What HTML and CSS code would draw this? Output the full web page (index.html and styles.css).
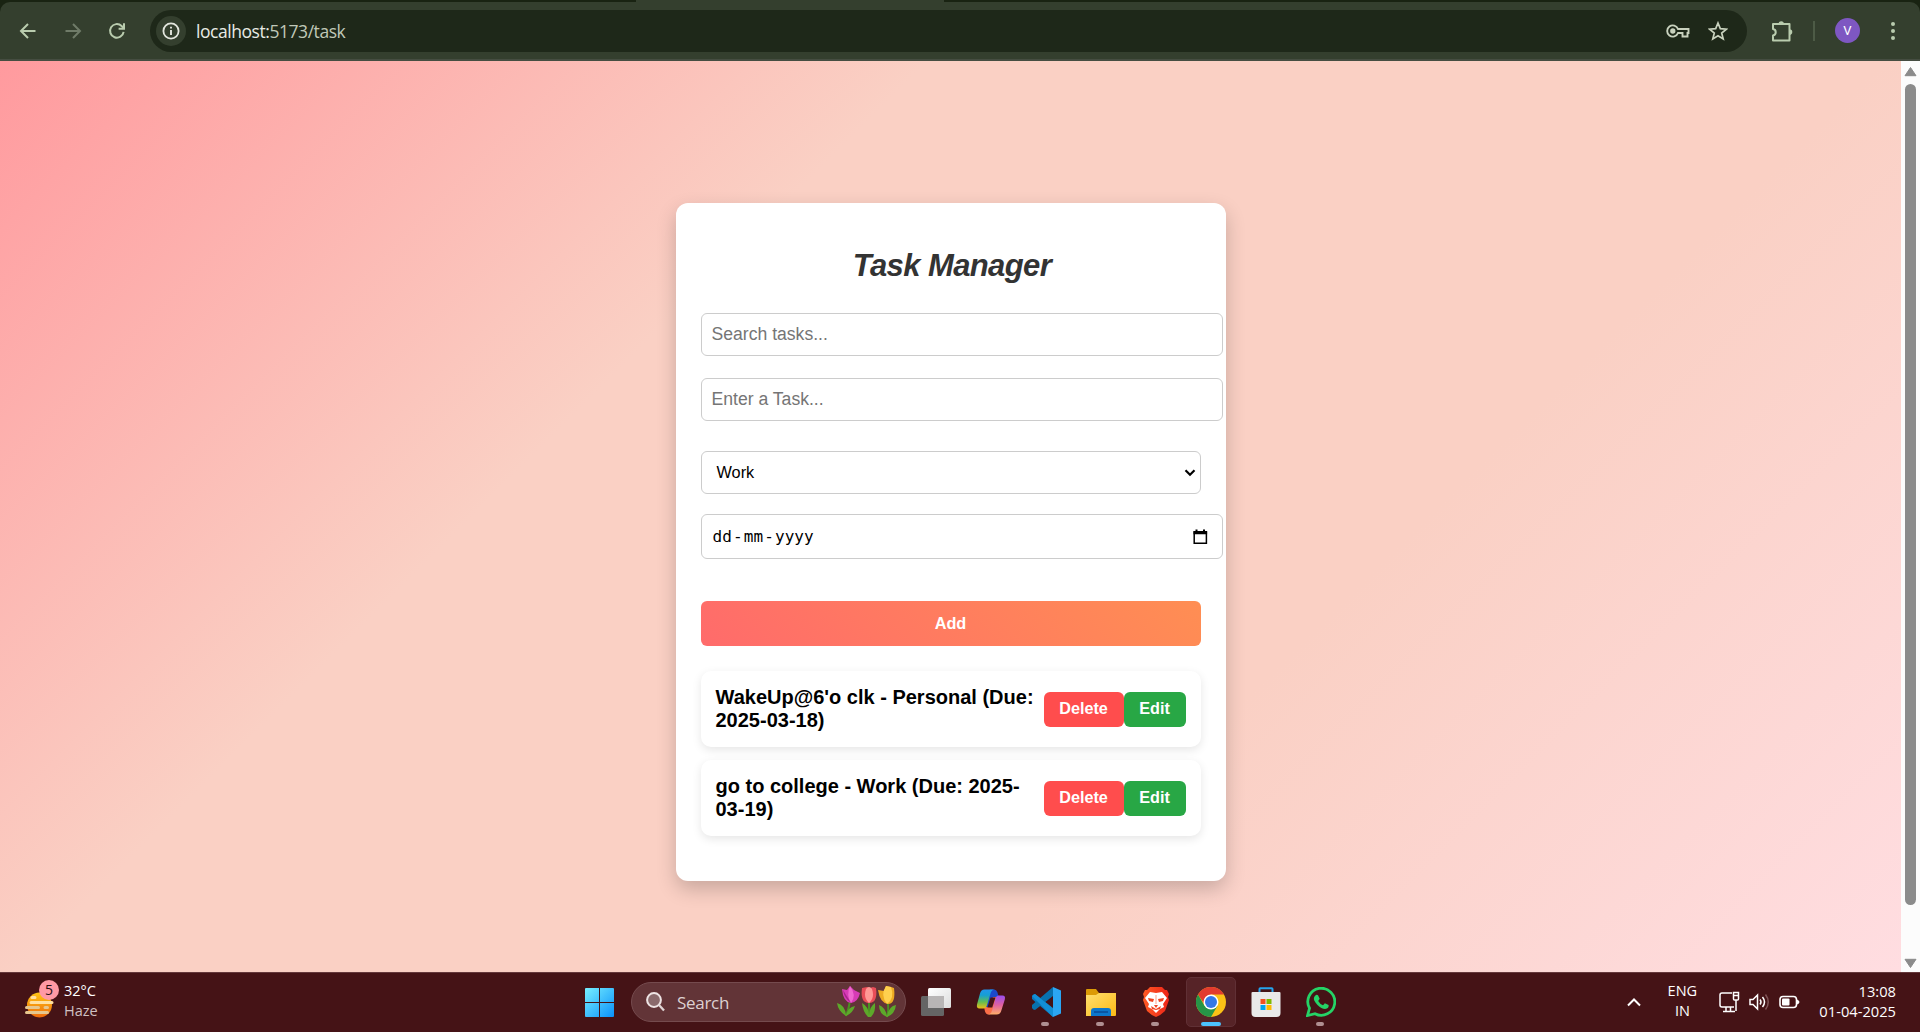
FILE: index.html
```html
<!DOCTYPE html>
<html lang="en">
<head>
<meta charset="utf-8">
<title>Task Manager</title>
<link rel="stylesheet" href="styles.css">
</head>
<body>
<header class="browser">
  <div class="tabstrip"><span class="active-tab"></span></div>
  <div class="toolbar">
    <nav class="nav">
      <svg width="20" height="20" viewBox="0 0 20 20" class="nav-icon"><path d="M17.5 10H3.5M10 3L3 10l7 7"/></svg>
      <svg width="20" height="20" viewBox="0 0 20 20" class="nav-icon disabled"><path d="M2.500 10h14M10 3l7 7-7 7"/></svg>
      <svg width="20" height="20" viewBox="0 0 20 20" class="nav-icon"><path d="M16.600 10.800A6.800 6.800 0 1 1 14.600 5L17 7.400M17 2.300v5.400h-5.400"/></svg>
    </nav>
    <div class="omnibox">
      <span class="site-info"><svg width="18" height="18" viewBox="0 0 18 18"><circle cx="9" cy="9" r="7.600" fill="none" stroke="#e3e6de" stroke-width="1.800"/><path d="M9 8v5M9 4.800v1.800" stroke="#e3e6de" stroke-width="1.900"/></svg></span>
      <span class="url">localhost:<span class="url-rest">5173/task</span></span>
      <svg class="key" width="24" height="16" viewBox="0 0 24 16" fill="none" stroke="#c9d2be" stroke-width="1.900"><path d="M12 6A5.600 5.600 0 1 0 12 10H16.500v3.500h5V10h1V6z"/><circle cx="6.800" cy="8" r="1.700" fill="#c9d2be"/></svg>
      <svg class="star" width="20" height="20" viewBox="0 0 20 20"><path d="M10 2l2.300 5.600 6.100.5-4.700 3.900 1.500 5.900L10 14.700 4.800 17.900l1.500-5.900L1.600 8.100l6.100-.5z" fill="none" stroke="#c9d2be" stroke-width="1.700"/></svg>
    </div>
    <svg class="ext" width="22" height="22" viewBox="0 0 22 22"><path d="M2 4h16.500v16.500H2V15.500a3.300 3.300 0 0 0 0-6.500z" fill="none" stroke="#b9ccae" stroke-width="2" stroke-linejoin="round"/><path d="M7.500 4a2.700 2.700 0 0 1 5.400 0zM18.500 9.300a2.800 2.800 0 0 1 0 5.600z" fill="#b9ccae"/></svg>
    <span class="divider"></span>
    <span class="avatar">V</span>
    <svg class="dots" width="6" height="20" viewBox="0 0 6 20" fill="#b9ccae"><circle cx="3" cy="3" r="2"/><circle cx="3" cy="10" r="2"/><circle cx="3" cy="17" r="2"/></svg>
  </div>
</header>

<div class="viewport">
  <main class="page">
    <section class="card">
      <h1 class="title">Task Manager</h1>
      <input class="field search" type="text" placeholder="Search tasks...">
      <input class="field task" type="text" placeholder="Enter a Task...">
      <div class="select"><span>Work</span><svg width="12" height="8" viewBox="0 0 12 8"><path d="M1.500 1.200L6 5.700l4.500-4.500" fill="none" stroke="#000" stroke-width="2.200"/></svg></div>
      <div class="date"><span class="date-text"><span>dd</span><i>-</i><span>mm</span><i>-</i><span>yyyy</span></span>
        <svg width="15" height="16" viewBox="0 0 15 16"><path d="M1.200 3h12.200v11.300H1.200z" fill="none" stroke="#000" stroke-width="1.500"/><path d="M.5 2h13.600v3.200H.5zM2.500.5h2V3h-2zM10 .5h2V3h-2z"/></svg></div>
      <button class="add">Add</button>
      <ul class="tasks">
        <li class="item"><span class="label">WakeUp@6'o clk - Personal (Due: 2025-03-18)</span><button class="btn delete">Delete</button><button class="btn edit">Edit</button></li>
        <li class="item"><span class="label">go to college - Work (Due: 2025-03-19)</span><button class="btn delete">Delete</button><button class="btn edit">Edit</button></li>
      </ul>
    </section>
  </main>
  <aside class="scrollbar">
    <svg width="13" height="10" viewBox="0 0 13 10"><path d="M6.500.5L12 8.700H1z" fill="#8b8b8b" stroke="#8b8b8b" stroke-linejoin="round"/></svg>
    <span class="thumb"></span>
    <svg width="13" height="10" viewBox="0 0 13 10"><path d="M6.500 9.500L12 1.300H1z" fill="#8b8b8b" stroke="#8b8b8b" stroke-linejoin="round"/></svg>
  </aside>
</div>

<footer class="taskbar">
  <div class="weather">
    <div class="weather-icon">
      <svg width="32" height="28" viewBox="0 0 32 28"><defs><linearGradient id="sun" x2="0" y2="1"><stop stop-color="#ffc414"/><stop offset="1" stop-color="#ee6a0b"/></linearGradient></defs><circle cx="15.500" cy="14" r="12.500" fill="url(#sun)"/><g stroke="#ffe0a0" stroke-width="3" stroke-linecap="round"><path d="M8 6.500h3M7 11.500h21"/><path stroke="#e6c68e" d="M2.500 16.500h12M21 16.500h2.500M2.500 21.500h21"/></g></svg>
      <span class="badge">5</span>
    </div>
    <div class="weather-text"><span>32°C</span><span class="muted">Haze</span></div>
  </div>

  <div class="dock">
    <svg class="start" width="29" height="29" viewBox="0 0 29 29"><defs><linearGradient id="win" x2="1" y2="1"><stop stop-color="#77efff"/><stop offset="1" stop-color="#0a91fa"/></linearGradient></defs><path d="M0 1a1 1 0 0 1 1-1h13v14H0zM15 0h13a1 1 0 0 1 1 1v13H15zM0 15h14v14H1a1 1 0 0 1-1-1zM15 15h14v13a1 1 0 0 1-1 1H15z" fill="url(#win)"/></svg>
    <div class="search-box">
      <svg width="19" height="20" viewBox="0 0 19 20"><circle cx="8" cy="8" r="6.900" fill="#8a6a6c" stroke="#eee4e4" stroke-width="2"/><path d="M13 13l5 5.500" stroke="#e0d6d6" stroke-width="2.300"/></svg>
      <span>Search</span>
      <svg class="tulips" width="60" height="32" viewBox="0 0 60 32">
        <g fill="none" stroke="#4b8f22" stroke-width="2"><path d="M13 15Q12 22 9 30M32 16v15M51 16q1 8-1 15"/></g>
        <g fill="#5da82a"><path d="M9 30Q1 25 0 17q8 2 9 12Q11 21 18 20q-2 7-9 10zM31 31q-5-5-6-14 7 4 7 12Q33 20 38 17q1 9-4 14zM50 31q-8-3-8-12 6 2 8 11 2-10 9-11-1 9-9 12z"/></g>
        <path d="M5 3l5 1 3-4 4 4 6 3q-2 9-9 10Q6 16 5 3z" fill="#d73bb5"/><path d="M13 0q-4 9 1 17Q20 9 13 0z" fill="#f067cf"/><path d="M6 4q1 8 8 13" fill="#a8238b"/>
        <path d="M25 2l5-1 3 1 3-1 3 1q2 15-7 15T25 2z" fill="#e84d58"/><path d="M29 3q3-4 6 0 3 9-3 14-6-5-3-14z" fill="#ff9995"/>
        <path d="M41 4l6 1 2-5 5 1 3 1q2 16-6 16-8-1-10-14z" fill="#edaa22"/><path d="M49 0q-6 9 1 18 8-6 4-17z" fill="#ffd04e"/>
      </svg>
    </div>
    <div class="apps">
      <span class="app"><svg width="30" height="30" viewBox="0 0 30 30"><defs><linearGradient id="tv" x2="1" y2="1"><stop stop-color="#fff"/><stop offset="1" stop-color="#dcdcdc"/></linearGradient></defs><rect y="9" width="23" height="20" rx="1.500" fill="#656565"/><rect x="7" y="1" width="23" height="20" rx="1.500" fill="url(#tv)"/><path d="M7 9h16v12H8.500A1.500 1.500 0 0 1 7 19.500z" fill="#b8b5b5"/></svg></span>
      <span class="app"><svg width="30" height="30" viewBox="0 0 30 30"><defs><linearGradient id="c1" x2="0" y2="1"><stop stop-color="#2195ed"/><stop offset=".3" stop-color="#169fd4"/><stop offset=".65" stop-color="#61bd52"/><stop offset="1" stop-color="#eebd16"/></linearGradient><linearGradient id="c2" x2="0" y2="1"><stop stop-color="#994df0"/><stop offset=".5" stop-color="#df60a0"/><stop offset="1" stop-color="#ffae68"/></linearGradient></defs><path d="M14 2.500h4q2.500 0 3.300 2.500l1.200 4h2q-4 0-5.500 4l-2.500 8H9l4-17z" fill="#1b49ca"/><path d="M8 20h6l3-10h4l-4.500 14q-1 3.500-4 3.500-2.500 0-3.500-3z" fill="#fa6d47"/><path d="M8.500 2.500H19q-3.500 0-4.500 4L11 18q-1 3.500-3.500 3.500h-4Q.2 21.500 1 17.500L4 6.500q1-4 4.500-4z" fill="url(#c1)"/><path d="M22 8.500h4.500q3.300 0 2.300 4L25.500 23q-1 4.500-5 4.500H11q4 0 5-4l3.500-12q1-3 2.500-3z" fill="url(#c2)"/><path d="M14.500 10.500h5l-3.300 10h-4.800z" fill="#451316"/></svg></span>
      <span class="app running"><svg width="30" height="30" viewBox="0 0 30 30"><path d="M1 9q1-2 3-2l18 14v9L1 12z" fill="#0879bd"/><path d="M1 21q1 2 3 2L22 9V0L1 18z" fill="#0871ae"/><path d="M1 9l3-2 18 14.500V30Z" fill="#128fd6"/><path d="M22 0l8 3.500v23L22 30V8.500z" fill="#2ba6f3"/></svg></span>
      <span class="app running"><svg width="30" height="30" viewBox="0 0 30 30"><defs><linearGradient id="fold" x2="1" y2="1"><stop stop-color="#ffe070"/><stop offset="1" stop-color="#fbb915"/></linearGradient></defs><path d="M0 3q0-1 1-1h9l3 4h16v10H0z" fill="#dc9b06"/><path d="M0 8h10l3-2h17v22q0 1-1 1H0z" fill="url(#fold)"/><path d="M5 29v-5q0-3 3-3h14q3 0 3 3v5z" fill="#0d77cb"/><path d="M8 25h14" stroke="#084b97" stroke-width="1.500"/></svg></span>
      <span class="app running"><svg width="30" height="30" viewBox="0 0 30 30"><defs><linearGradient id="brave" x2="1"><stop stop-color="#ff5a24"/><stop offset="1" stop-color="#ee2418"/></linearGradient></defs><path d="M9 0h12l3 3h2l2 4-1 3 1 3-4 11q-4 4-9 6-5-2-9-6L2 13l1-3-1-3 2-4h2z" fill="url(#brave)"/><path d="M9 5l6 1 6-1 5 6-4 6 1 3-4 2-4 4-4-4-4-2 1-3-4-6z" fill="#fff"/><path d="M7 11l6 1-1 3-4-1zM23 11l-6 1 1 3 4-1zM13 18h4l-2 3zM10 19l5 3 5-3-1 3-4 1-4-1z" fill="#f04420"/><path d="M14 8h2v9h-2z" fill="#ffd0c3"/></svg></span>
      <span class="app running active"><svg width="30" height="30" viewBox="0 0 30 30"><circle cx="15" cy="15" r="15" fill="#fbc116"/><path d="M2 7.500A15 15 0 0 1 28 7.500H15L9 18z" fill="#e23b2e"/><path d="M2 7.500l6.500 11.250L21.500 18.800 15 30A15 15 0 0 1 2 7.500z" fill="#269447"/><circle cx="15" cy="15" r="7.500" fill="#fff"/><circle cx="15" cy="15" r="6" fill="#3478e6"/></svg></span>
      <span class="app"><svg width="30" height="30" viewBox="0 0 30 30"><path d="M8.500 6V2q0-.8.800-.8h11.400q.8 0 .8.800v4" fill="none" stroke="#25a4ec" stroke-width="2"/><path d="M.5 6q0-1 1-1h27q1 0 1 1v20q0 4-4 4h-21q-4 0-4-4z" fill="#e9e9e9"/><path d="M9.500 12h5v5h-5z" fill="#f25022"/><path d="M15.500 12h5v5h-5z" fill="#7fba00"/><path d="M9.500 18h5v5h-5z" fill="#00a4ef"/><path d="M15.500 18h5v5h-5z" fill="#ffb900"/></svg></span>
      <span class="app running"><svg width="30" height="30" viewBox="0 0 30 30"><path d="M1.500 28.500l2-7.200A13.500 13.500 0 1 1 9 26.700z" fill="none" stroke="#25d366" stroke-width="2.800"/><path d="M10 8q1-.6 2 .2l1.700 3.500-1.500 2.200q1.800 3.200 4.800 4.300l1.900-2 3.700 1.800q.6 3.500-3.500 4Q15.500 22 11.500 18 7 13 8 10.500 8.700 8.500 10 8z" fill="#25d366"/></svg></span>
    </div>
  </div>

  <div class="tray">
    <svg class="chevron" width="14" height="10" viewBox="0 0 14 10"><path d="M1 8.500l6-6 6 6" fill="none" stroke="#fff" stroke-width="2"/></svg>
    <div class="lang"><span>ENG</span><span>IN</span></div>
    <div class="status">
      <svg width="21" height="22" viewBox="0 0 21 22" fill="none" stroke="#fff" stroke-width="1.500"><path d="M13 2H3Q1 2 1 4v10q0 2 2 2h12M4 20.500h12M7 16v4M11.500 16v4"/><path d="M14.500 1.500h5V8q0 1-1 1h-3q-1 0-1-1zM17 9v11M14.500 4.500h5"/></svg>
      <svg width="21" height="18" viewBox="0 0 21 18" fill="none" stroke="#fff" stroke-width="1.500"><path d="M1 6.500h3L8.500 2v14L4 11.500H1zM11 6.500q2 2.500 0 5M13.500 4q4 5 0 10"/><path d="M16.500 1.500q5.500 7.500 0 15" stroke="#805457"/></svg>
      <svg width="21" height="14" viewBox="0 0 21 14"><rect x="1" y="1.500" width="16.500" height="11" rx="3" fill="none" stroke="#fff" stroke-width="1.600"/><rect x="3" y="3.500" width="7.500" height="7" rx="1" fill="#fff"/><path d="M18 4.500q2.500 1 2.500 2.500T18 9.500z" fill="#fff"/></svg>
    </div>
    <div class="clock"><span>13:08</span><span>01-04-2025</span></div>
  </div>
</footer>
</body>
</html>
```
FILE: styles.css
```css
* { box-sizing: border-box; }
body { margin: 0; width: 1920px; height: 1032px; overflow: hidden; display: flex; flex-direction: column; font-family: "Liberation Sans", Arial, sans-serif; }
svg { display: block; flex: none; }

/* browser chrome */
.browser { height: 61px; background: #192312; display: flex; flex-direction: column; font-family: "Open Sans", sans-serif; }
.tabstrip { height: 2px; padding-left: 636px; }
.active-tab { display: block; width: 308px; height: 2px; background: #343f2e; }
.toolbar { height: 59px; background: #343f2e; border-bottom: 2px solid #454d41; border-radius: 10px 10px 0 0; display: flex; align-items: center; padding-left: 18px; }
.nav { display: flex; gap: 24.500px; width: 132px; }
.nav-icon { fill: none; stroke: #b9ccae; stroke-width: 2; }
.nav-icon.disabled { stroke: #6f7b68; }
.omnibox { width: 1597px; height: 42px; border-radius: 21px; background: #1e2819; display: flex; align-items: center; padding: 0 12px 0 6px; }
.site-info { width: 30px; height: 30px; border-radius: 50%; background: #343f2e; display: flex; align-items: center; justify-content: center; }
.url { margin-left: 10px; color: #e8ebe4; font-size: 17.5px; letter-spacing: -.45px; line-height: 24px; flex: 1; }
.url-rest { color: #c0c8b8; }
.key { margin-right: 18px; }
.star { margin-right: 7.500px; }
.ext { margin-left: 23.500px; }
.divider { width: 2px; height: 20px; background: #4d5b46; margin-left: 20.500px; }
.avatar { width: 25px; height: 25px; border-radius: 50%; background: #7e57c2; color: #fff; font: 13px/25px Roboto, sans-serif; text-align: center; margin-left: 20px; }
.dots { margin-left: 29.500px; }

/* page */
.viewport { height: 911px; display: flex; }
.page { width: 1901px; background: linear-gradient(135deg, #ff9a9e 0%, #fad0c4 33%, #fad0c4 67%, #ffdde1 100%); display: flex; justify-content: center; align-items: flex-start; padding-top: 142px; }
.card { width: 550px; height: 678px; background: #fff; border-radius: 12px; padding: 44px 25px 0; box-shadow: 0 8px 20px rgba(0, 0, 0, .2); display: flex; flex-direction: column; }
.title { margin: 0 0 29px; font-size: 31px; letter-spacing: -.6px; line-height: 37px; font-style: italic; color: #333; text-align: center; padding-left: 3px; }
.field { width: 522px; height: 43px; flex: none; border: 1px solid #ccc; border-radius: 6px; padding: 0 10px; font: 17.6px "Liberation Sans", Arial, sans-serif; background: #fff; }
.field::placeholder { color: #757575; }
.search { margin-bottom: 22px; }
.task { margin-bottom: 30px; }
.select { height: 43px; border: 1px solid #ccc; border-radius: 6px; display: flex; align-items: center; justify-content: space-between; padding: 0 4px 0 15px; font-size: 16.300px; margin-bottom: 20px; }
.date { width: 522px; height: 45px; border: 1px solid #ccc; border-radius: 6px; display: flex; align-items: center; justify-content: space-between; padding: 0 14px 0 11px; margin-bottom: 42px; }
.date-text { font: 16px/20px "DejaVu Sans Mono", monospace; display: flex; gap: 1.200px; }
.date-text i { font-style: normal; }
.add { height: 45px; border: 0; border-radius: 6px; background: linear-gradient(45deg, #ff6b6b, #ff8e53); color: #fff; font: bold 16.300px "Liberation Sans", Arial, sans-serif; margin-bottom: 25px; }
.tasks { margin: 0; padding: 0; list-style: none; display: flex; flex-direction: column; gap: 13px; }
.item { height: 76px; border-radius: 10px; background: #fff; box-shadow: 0 3px 10px rgba(0, 0, 0, .1); padding: 0 15px; display: flex; align-items: center; }
.label { flex: 1; font-size: 20px; line-height: 23px; font-weight: bold; color: #000; padding-bottom: 1px; }
.btn { height: 35px; border: 0; border-radius: 6px; padding: 0 0 1px; color: #fff; font: bold 16.200px "Liberation Sans", Arial, sans-serif; }
.delete { width: 80px; background: #ff4d4d; }
.edit { width: 62px; background: #28a745; }
.scrollbar { width: 19px; background: #fcfcfc; display: flex; flex-direction: column; align-items: center; padding: 6px 0 3px; gap: 7px; }
.thumb { width: 11px; height: 821px; border-radius: 6px; background: #8b8b8b; margin-bottom: 46px; }

/* taskbar */
.taskbar { height: 60px; background: #451316; border-top: 1px solid #65383b; padding-bottom: 1px; display: grid; grid-template-columns: 585px 1fr auto; align-items: center; color: #fff; font-family: "Open Sans", sans-serif; font-size: 15px; }
.weather { display: flex; padding-left: 24px; gap: 8px; }
.weather-icon { position: relative; width: 32px; height: 40px; padding-top: 9px; }
.badge { position: absolute; left: 15px; top: -2px; width: 20px; height: 20px; border-radius: 50%; background: #ff99a4; color: #2b1013; font-size: 14px; line-height: 20px; text-align: center; }
.weather-text { display: flex; flex-direction: column; line-height: 20px; font-size: 14.500px; position: relative; top: -1px; }
.muted { color: #cfc0c1; }
.dock { display: flex; align-items: center; }
.start { margin-right: 17px; }
.search-box { width: 275px; height: 40px; border-radius: 20px; background: #623437; border: 1px solid #754b4e; display: flex; align-items: center; padding-left: 14px; font-size: 17px; color: #ddd0d1; }
.search-box span { margin-left: 12px; letter-spacing: -.3px; width: 160px; }
.apps { display: flex; margin-left: 2px; }
.app { width: 55px; height: 50px; position: relative; display: flex; align-items: center; justify-content: center; }
.running::after { content: ""; position: absolute; width: 8px; height: 4px; border-radius: 2px; background: #af8f91; bottom: 1px; left: 23px; }
.active { width: 50px; margin: 0 2.500px; border-radius: 5px; background: #562327; border: 1px solid #603035; }
.active::after { width: 20px; left: 14px; bottom: 0; background: #4cc2ff; }
.tray { display: flex; align-items: center; padding-right: 24px; }
.lang { width: 40px; margin-left: 21px; display: flex; flex-direction: column; align-items: center; line-height: 20px; font-size: 14.500px; position: relative; top: -1px; }
.status { display: flex; align-items: center; gap: 9px; margin-left: 17px; }
.clock { display: flex; flex-direction: column; align-items: flex-end; line-height: 20px; margin-left: 19px; font-size: 14.700px; position: relative; top: -1px; }
```
